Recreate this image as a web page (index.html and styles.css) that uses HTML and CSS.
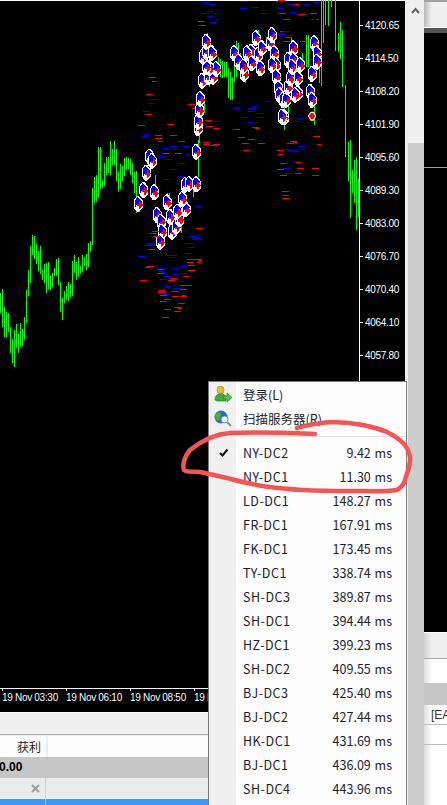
FILE: index.html
```html
<!DOCTYPE html>
<html lang="zh">
<head>
<meta charset="utf-8">
<title>MT4 Server List</title>
<link rel="stylesheet" href="styles.css">
</head>
<body>
<div class="page">
  <div class="main">
    <svg class="chart" width="405" height="712" viewBox="0 0 405 712">
      <defs>
        <g id="m" shape-rendering="crispEdges">
          <path fill="#fff" d="M-3-24H3L15-9V12L3 24H-3L-12 12V-12Z"/>
          <path fill="#0000ff" d="M-3-20H0L12-7V-3H6V3H-6V9H-9V-11Z"/>
          <path fill="#ff0000" d="M-3 0H3V-8H6L15 3 6 15H3V7H-3Z"/>
        </g>
      </defs>
      <path class="frame" d="M0 .5H405M359.500 0V688M0 688.500H359"/>
      <path class="frame" d="M359 25.500h4M359 58.500h4M359 91.500h4M359 124.500h4M359 157.500h4M359 190.500h4M359 223.500h4M359 256.500h4M359 289.500h4M359 322.500h4M359 355.500h4M2.500 688v3M66.500 688v3M130.500 688v3M194.500 688v3"/>
      <g class="axis">
        <text x="365" y="29">4120.65</text><text x="365" y="62">4114.50</text><text x="365" y="95">4108.20</text><text x="365" y="128">4101.90</text><text x="365" y="161">4095.60</text><text x="365" y="194">4089.30</text><text x="365" y="227">4083.00</text><text x="365" y="260">4076.70</text><text x="365" y="293">4070.40</text><text x="365" y="326">4064.10</text><text x="365" y="359">4057.80</text>
        <text x="2" y="701">19 Nov 03:30</text><text x="66" y="701">19 Nov 06:10</text><text x="130" y="701">19 Nov 08:50</text><text x="194" y="701">19 N</text>
      </g>
      <g transform="translate(0 130) scale(.33333)">
        <path class="bars" d="M2 490V550M7 477V590M13 530V620M19 545V620M25 550V605M31 590V668M37 627V698M43 600V712M49 582V653M55 613V668M61 578V650M67 597V648M73 560V630M79 480V578M85 420V497M91 348V458M97 315V375M103 318V388M109 342V402M115 362V422M121 348V432M127 420V450M133 403V460M139 398V490M145 395V478M151 438V480M157 430V470M163 415V437M169 387V438M175 384V465M181 456V545M187 505V570M193 483V518M199 467V510M205 457V513M211 462V500M217 393V497M223 375V430M229 396V450M235 380V440M241 408V432M247 375V425M253 380V408M259 372V420M265 340V410M271 333V365M277 173V345M283 140V220M289 135V215M295 50V205M301 52V178M307 150V175M313 100V168M319 80V135M325 80V130M331 33V135M337 57V105M343 33V105M349 57V152M355 125V185M361 102V178M367 108V152M373 83V138M379 80V120M385 85V118M391 88V135M397 98V160M403 125V190M409 123V250"/>
      </g>
      <g transform="translate(120 0) scale(.33333)">
        <path class="bars" d="M54 590V630M60 620V635M108 525V600M144 580V640M150 580V625M186 640V700M200 590V620M222 560V590M235 420V530M240 400V430M254 290V340M264 100V125M270 240V260M297 170V225M303 178V230M309 182V235M315 185V232M321 187V230M327 205V295M333 215V300M339 230V300M345 180V245M351 122V230M357 130V170M363 160V235M378 230V250M415 90V120M423 180V215M440 110V135M470 160V250M494 300V390M506 250V345M515 115V140M548 160V190M560 105V200M566 105V200M583 310V375M600 145V250M605 0V258M612 0V130M618 0V75M626 0V78M634 0V20M648 0V153M655 100V155M661 65V178M668 90V262M678 255V470M685 425V543M691 420V655M697 510V580M703 480V608M709 472V690M715 538V650"/>
        <path class="red" d="M475 3h21M515 15h21M478 42h21M490 58h21M535 45h21M570 42h21M575 60h21M235 65h21M238 78h21M480 95h21M495 113h21M490 125h21M540 125h21M88 233h21M95 245h15M78 285h21M205 315h21M215 325h15M68 335h21M75 345h21M55 378h21M140 373h21M105 408h21M105 415h21M150 408h21M175 425h21M115 425h15M125 462h21M165 462h21M255 362h21M258 380h21M280 385h21M395 383h21M405 385h15M340 390h21M355 412h21M385 418h21M365 432h21M415 432h21M250 428h21M250 435h21M270 438h21M280 433h21M370 453h21M470 453h21M475 465h15M510 425h21M520 428h15M480 490h21M525 487h21M470 508h21M490 505h21M530 505h21M480 528h21M525 520h21M575 505h21M575 528h21M485 575h21M485 587h21M485 597h21M228 685h21M200 778h33M580 410h21M590 433h15M500 430h21"/>
        <path class="blue" d="M245 7h21M268 15h21M262 35h21M250 40h21M280 42h21M262 50h21M285 60h15M270 68h21M360 5h21M395 22h21M360 25h21M420 40h21M465 5h21M470 25h21M500 15h21M510 38h21M550 15h21M580 8h21M570 60h21M490 95h21M475 105h21M500 108h21M88 298h21M85 310h21M70 335h21M70 405h21M65 410h15M150 440h21M125 445h21M160 448h21M185 440h21M195 465h15M115 470h21M135 480h21M175 490h21M150 510h21M175 530h21M130 540h21M225 620h21M205 712h21M225 717h21M215 720h21M78 730h21M85 735h21M140 767h21M55 770h21M340 325h21M385 325h21M395 320h15M435 305h15M410 340h21M385 335h21M365 352h21M410 352h21M380 367h21M265 365h21M280 365h21M490 450h21M500 452h21M515 452h21M535 440h21M540 448h15M490 505h21M495 520h21M530 355h21M520 365h21M590 360h15M590 390h15"/>
        <g>
          <use href="#m" x="88" y="470"/><use href="#m" x="95" y="483"/><use href="#m" x="78" y="518"/><use href="#m" x="70" y="570"/><use href="#m" x="102" y="577"/><use href="#m" x="54" y="612"/><use href="#m" x="140" y="607"/><use href="#m" x="110" y="645"/><use href="#m" x="122" y="665"/><use href="#m" x="125" y="695"/><use href="#m" x="120" y="725"/><use href="#m" x="150" y="650"/><use href="#m" x="155" y="695"/><use href="#m" x="167" y="680"/><use href="#m" x="178" y="658"/><use href="#m" x="172" y="635"/><use href="#m" x="197" y="628"/><use href="#m" x="187" y="597"/><use href="#m" x="195" y="555"/><use href="#m" x="207" y="552"/><use href="#m" x="228" y="553"/><use href="#m" x="228" y="455"/><use href="#m" x="233" y="385"/><use href="#m" x="233" y="365"/><use href="#m" x="238" y="330"/><use href="#m" x="240" y="297"/><use href="#m" x="246" y="242"/><use href="#m" x="265" y="232"/><use href="#m" x="280" y="230"/><use href="#m" x="288" y="207"/><use href="#m" x="268" y="205"/><use href="#m" x="258" y="200"/><use href="#m" x="248" y="170"/><use href="#m" x="258" y="155"/><use href="#m" x="275" y="160"/><use href="#m" x="258" y="125"/><use href="#m" x="342" y="160"/><use href="#m" x="355" y="185"/><use href="#m" x="372" y="222"/><use href="#m" x="370" y="200"/><use href="#m" x="393" y="155"/><use href="#m" x="380" y="160"/><use href="#m" x="395" y="190"/><use href="#m" x="413" y="165"/><use href="#m" x="425" y="145"/><use href="#m" x="420" y="205"/><use href="#m" x="407" y="115"/><use href="#m" x="450" y="130"/><use href="#m" x="455" y="105"/><use href="#m" x="462" y="160"/><use href="#m" x="467" y="195"/><use href="#m" x="455" y="195"/><use href="#m" x="468" y="230"/><use href="#m" x="475" y="265"/><use href="#m" x="478" y="285"/><use href="#m" x="488" y="300"/><use href="#m" x="498" y="300"/><use href="#m" x="503" y="262"/><use href="#m" x="510" y="235"/><use href="#m" x="520" y="145"/><use href="#m" x="503" y="180"/><use href="#m" x="520" y="180"/><use href="#m" x="515" y="200"/><use href="#m" x="540" y="195"/><use href="#m" x="533" y="235"/><use href="#m" x="533" y="280"/><use href="#m" x="525" y="285"/><use href="#m" x="492" y="352"/><use href="#m" x="485" y="350"/><use href="#m" x="570" y="275"/><use href="#m" x="575" y="300"/><use href="#m" x="575" y="222"/><use href="#m" x="582" y="130"/><use href="#m" x="590" y="160"/><use href="#m" x="590" y="185"/>
        </g>
        <path fill="#fff" d="M563 348l9-13h9l8 13-8 14h-9z"/>
        <path fill="#ff0000" d="M566 348l7-9h6l7 9-7 10h-6z"/>
      </g>
      <g transform="translate(130 230) scale(.33333)">
        <path class="red" d="M50 110h21M45 112h15M30 151h21M80 119h21M80 130h21M120 145h21M115 151h21M160 140h21M150 166h36M170 167h15M175 121h21M195 88h21M205 92h12M200 97h12M170 98h21M175 107h21M150 178h21M85 182h21M85 187h21M90 196h21M127 184h21M127 199h21M150 199h21M157 196h12M103 208h21M90 214h21M145 220h21M103 238h21M133 232h21M145 235h12M133 244h21M97 262h21M55 58h21M67 5h21M60 10h21M70 19h21"/>
        <path class="blue" d="M50 40h21M43 46h21M30 82h21M120 76h21M115 82h21M163 70h21M85 115h21M85 124h21M92 127h12M127 115h21M127 133h21M150 130h27M103 139h21M90 148h21M145 154h21M103 169h21M130 166h21M133 175h21M97 193h21M150 109h21M170 40h21M175 52h21M180 20h21M190 25h21M205 25h12M185 30h21"/>
      </g>
    </svg>
    <div class="toolbar"></div>
    <div class="table-head"><span class="head-cell">获利</span></div>
    <div class="total"><span class="total-value">0.00</span></div>
    <div class="row"><span class="row-cell"><svg width="9" height="9" viewBox="0 0 9 9"><path class="close" d="M1 1 8 8M8 1 1 8"/></svg></span></div>
    <div class="row selected"><span class="row-cell"></span></div>
  </div>

  <div class="scrollbar">
    <svg class="chevron" width="9" height="7" viewBox="0 0 9 7"><path d="M1 6 4.500 2 8 6"/></svg>
    <div class="thumb"></div>
  </div>

  <div class="side">
    <div class="side-top"></div>
    <div class="side-chart">
      <div class="side-chart-a"></div>
      <div class="side-chart-b"></div>
    </div>
    <div class="side-toolbar"></div>
    <div class="side-blank"></div>
    <div class="side-head"></div>
    <div class="side-row">[EA</div>
    <div class="side-row"></div>
    <div class="side-rest"></div>
  </div>

  <div class="menu">
    <div class="item">
      <svg class="item-icon" width="18" height="18" viewBox="0 0 18 18">
        <ellipse cx="6.500" cy="4" rx="3.500" ry="4" fill="#e8b83a" stroke="#b88a20" stroke-width=".7"/>
        <path d="M1 14c0-4 2-6 5.500-6S11 9 12 10.500V15H3z" fill="#3fae3a" stroke="#24812a" stroke-width=".7"/>
        <path d="M9 10h4V7l5 4.500L13 16v-3H9z" fill="#58c04a" stroke="#24812a" stroke-width=".7"/>
      </svg>
      <span class="label">登录(L)</span>
    </div>
    <div class="item">
      <svg class="item-icon" width="18" height="18" viewBox="0 0 18 18">
        <circle cx="7" cy="7" r="6.500" fill="#2a6fb5"/>
        <path d="M3 3c2-1 4 0 4 2S5 8 5 10 2 10 1.500 7 2 4 3 3z" fill="#4caf3f"/>
        <circle cx="10.500" cy="9.500" r="3.500" fill="#e8f4ff" stroke="#6c8cb0"/>
        <path d="M13 12l4 4" stroke="#8a94a8" stroke-width="2.200"/>
      </svg>
      <span class="label">扫描服务器(R)</span>
    </div>
    <div class="separator"></div>
    <div class="item">
      <svg class="item-icon check" width="10" height="9" viewBox="0 0 10 9"><path d="M1 5 3.500 7.500 8.500 1.500"/></svg>
      <span class="label latin">NY-DC2</span><span class="ping">9.42 ms</span>
    </div>
    <div class="item"><span class="label latin">NY-DC1</span><span class="ping">11.30 ms</span></div>
    <div class="item"><span class="label latin">LD-DC1</span><span class="ping">148.27 ms</span></div>
    <div class="item"><span class="label latin">FR-DC1</span><span class="ping">167.91 ms</span></div>
    <div class="item"><span class="label latin">FK-DC1</span><span class="ping">173.45 ms</span></div>
    <div class="item"><span class="label latin">TY-DC1</span><span class="ping">338.74 ms</span></div>
    <div class="item"><span class="label latin">SH-DC3</span><span class="ping">389.87 ms</span></div>
    <div class="item"><span class="label latin">SH-DC1</span><span class="ping">394.44 ms</span></div>
    <div class="item"><span class="label latin">HZ-DC1</span><span class="ping">399.23 ms</span></div>
    <div class="item"><span class="label latin">SH-DC2</span><span class="ping">409.55 ms</span></div>
    <div class="item"><span class="label latin">BJ-DC3</span><span class="ping">425.40 ms</span></div>
    <div class="item"><span class="label latin">BJ-DC2</span><span class="ping">427.44 ms</span></div>
    <div class="item"><span class="label latin">HK-DC1</span><span class="ping">431.69 ms</span></div>
    <div class="item"><span class="label latin">BJ-DC1</span><span class="ping">436.09 ms</span></div>
    <div class="item"><span class="label latin">SH-DC4</span><span class="ping">443.96 ms</span></div>
  </div>

  <svg class="scribble" width="447" height="805" viewBox="0 0 447 805">
    <path d="M315 434C290 433 255 432 230 433 215 434 200 442 190 450 185 456 182 464 184 470 188 473 195 471 200 472 210 474 218 476 227 478 237 481 247 483 257 485 272 488 288 489 303 490 320 491 337 491 353 491 368 491 385 492 397 490 402 487 404 484 405 480 407 472 411 465 410 457 409 451 407 447 403 443 398 438 393 435 387 432 380 429 372 427 363 425 352 423 341 422 330 422 320 423 310 424 297 428"/>
  </svg>
</div>
</body>
</html>
```
FILE: styles.css
```css
html, body {
  margin: 0;
  padding: 0;
  background: #000;
}
.page {
  position: relative;
  display: flex;
  width: 447px;
  height: 805px;
  overflow: hidden;
  font-family: "Noto Sans CJK SC", "Noto Sans", sans-serif;
}
.main {
  display: flex;
  flex-direction: column;
  width: 405px;
  flex: none;
  background: #f0f0f0;
}
.chart {
  display: block;
  flex: none;
  background: #000;
}
.frame {
  fill: none;
  stroke: #fff;
  stroke-width: 1;
  shape-rendering: crispEdges;
}
.axis text {
  fill: #fff;
  font-family: "Liberation Sans", sans-serif;
  font-size: 10px;
  letter-spacing: -.3px;
}
.bars, .red, .blue {
  fill: none;
  stroke-width: 3;
  shape-rendering: crispEdges;
}
.bars { stroke: #00ff00; }
.red { stroke: #ff0000; }
.blue { stroke: #0000ff; }
.toolbar {
  height: 23px;
  flex: none;
  background: #f0f0f0;
  border-top: 1px solid #fff;
  box-sizing: border-box;
  border-bottom: 1px solid #a8a8a8;
  margin-bottom: 1px;
}
.table-head {
  display: flex;
  height: 21px;
  flex: none;
  background: #fdfdfd;
}
.head-cell {
  box-sizing: border-box;
  width: 48px;
  padding-right: 5px;
  border-right: 2px solid #ededed;
  text-align: right;
  font-size: 12px;
  line-height: 21px;
  color: #222;
}
.total {
  height: 21px;
  flex: none;
  background: #c6c6c6;
  overflow: hidden;
}
.total-value {
  display: block;
  margin-left: -1px;
  font-family: "Liberation Sans", sans-serif;
  font-size: 12px;
  font-weight: bold;
  line-height: 21px;
  color: #000;
}
.row {
  height: 20px;
  flex: none;
  background: #ebebeb;
  margin-bottom: 1px;
}
.row.selected {
  background: #3399ff;
}
.row-cell {
  box-sizing: border-box;
  display: flex;
  align-items: center;
  justify-content: flex-end;
  width: 46px;
  height: 100%;
  padding-right: 5px;
  border-right: 1px solid #cfcfcf;
}
.close {
  fill: none;
  stroke: #9c9c9c;
  stroke-width: 2;
}
.scrollbar {
  position: relative;
  display: flex;
  flex-direction: column;
  align-items: center;
  flex: none;
  box-sizing: border-box;
  width: 19px;
  height: 805px;
  padding: 7px 0 0 1px;
  background: #f0f0f0;
}
.chevron {
  flex: none;
}
.chevron path {
  fill: none;
  stroke: #606060;
  stroke-width: 2;
}
.thumb {
  flex: none;
  box-sizing: border-box;
  width: 16px;
  height: 662px;
  margin: 129px 0 0 2px;
  background: #cdcdcd;
}
.side {
  display: flex;
  flex-direction: column;
  flex: 1;
  min-width: 0;
  background: #fff;
}
.side-top {
  box-sizing: border-box;
  height: 33px;
  flex: none;
  background: linear-gradient(90deg, #b8b8b8, #f0f0f0 8px);
  border-top: 2px solid #a0a0a0;
  border-bottom: 5px solid #555;
  box-shadow: inset 0 -1px 0 #fff;
}
.side-chart {
  display: flex;
  flex-direction: column;
  height: 600px;
  flex: none;
  background: #000;
}
.side-chart-a {
  box-sizing: border-box;
  height: 135px;
  flex: none;
  border-bottom: 1px solid #a0a0a0;
}
.side-chart-b {
  flex: 1;
  border-bottom: 1px solid #fff;
}
.side-toolbar {
  box-sizing: border-box;
  height: 26px;
  flex: none;
  background: linear-gradient(90deg, #d0d0d0, #f0f0f0 8px);
  border-bottom: 1px solid #a8a8a8;
}
.side-blank {
  height: 24px;
  flex: none;
  background: linear-gradient(90deg, #e0e0e0, #fff 8px);
}
.side-head {
  height: 22px;
  flex: none;
  background: #c6c6c6;
}
.side-row {
  box-sizing: border-box;
  height: 20px;
  flex: none;
  padding-left: 7px;
  overflow: hidden;
  white-space: nowrap;
  font-family: "Liberation Sans", sans-serif;
  font-size: 12px;
  line-height: 20px;
  color: #333;
  background: linear-gradient(90deg, #e0e0e0, #fff 8px);
  border-bottom: 1px solid #bbb;
}
.side-rest {
  flex: 1;
  background: linear-gradient(90deg, #dcdcdc, #fff 8px);
}
.menu {
  position: absolute;
  left: 208px;
  top: 381px;
  box-sizing: border-box;
  width: 199px;
  height: 424px;
  padding-top: 0;
  background: linear-gradient(90deg, #f0f0f0 27px, #fdfdfd 27px);
  border: 1px solid #7a7a7a;
  border-bottom: 0;
  font-size: 12.5px;
  color: #1c1c28;
}
.item {
  position: relative;
  display: flex;
  justify-content: space-between;
  align-items: center;
  height: 24px;
  padding: 0 14px 0 34px;
}
.latin {
  letter-spacing: .5px;
}
.item-icon {
  position: absolute;
  left: 5px;
  top: 4px;
}
.check {
  left: 10px;
  top: 8px;
}
.check path {
  fill: none;
  stroke: #111;
  stroke-width: 2;
}
.separator {
  height: 10px;
  margin-left: 34px;
  box-sizing: border-box;
  border-bottom: 1px solid #e2e2e2;
  transform: translateY(-3px);
}
.ping {
  word-spacing: 1px;
}
.scribble {
  position: absolute;
  left: 0;
  top: 0;
  pointer-events: none;
}
.scribble path {
  fill: none;
  stroke: #f55454;
  stroke-width: 4.500;
  stroke-linecap: round;
  stroke-linejoin: round;
}
```
